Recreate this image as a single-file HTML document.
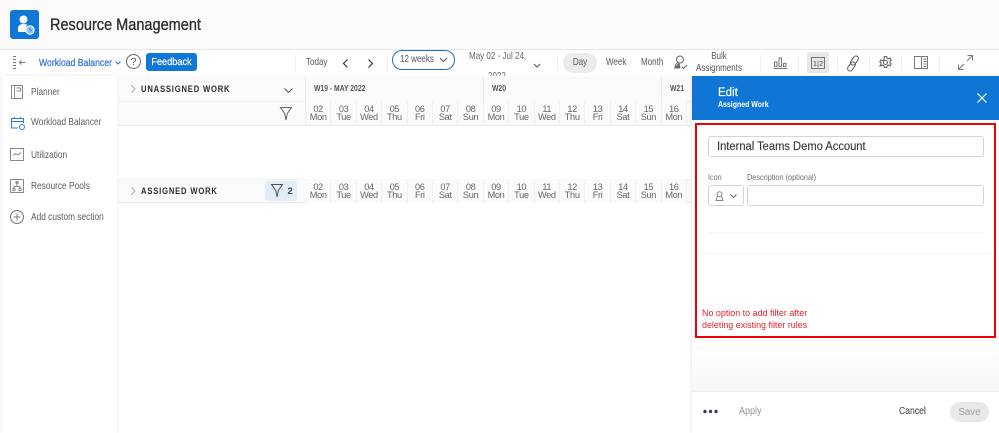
<!DOCTYPE html>
<html><head><meta charset="utf-8">
<style>
html,body{margin:0;padding:0;background:#fff}
#p{position:relative;width:999px;height:433px;overflow:hidden;background:#fff;font-family:"Liberation Sans",sans-serif;color:#4b4b4b}
#p div{position:absolute}
.t{white-space:nowrap;transform-origin:0 50%}
.d{width:25.4px;text-align:center;font-size:9.2px;letter-spacing:-.35px;line-height:8px;color:#666;height:24px;border-right:1px solid #f0f0f0;box-sizing:border-box;padding-top:4px;background:#fafafa}
.n{font-size:10.3px;color:#5c5c5c;left:31px;white-space:nowrap;transform:scaleX(.81);transform-origin:0 50%}
.s{width:1px;background:#ececec;top:55px;height:16px}
.b{font-size:10.3px;line-height:12px;color:#555;transform:scaleX(.78)}
.h{font-size:9.3px;font-weight:700;letter-spacing:1px;line-height:12px;color:#2c2c2c;transform:scaleX(.82)}
.w{font-size:8.5px;font-weight:700;line-height:11px;color:#555;transform:scaleX(.8)}
svg{position:absolute;overflow:visible}
</style></head><body><div id="p">

<div style="left:0;top:0;width:999px;height:49px;background:#fafafa"></div>
<div style="left:0;top:49px;width:999px;height:1px;background:#e6e6e6"></div>
<div style="left:10px;top:10px;width:29px;height:29px;background:#0f78d7;border-radius:3px"></div>
<svg style="left:10px;top:10px" width="29" height="29" viewBox="0 0 29 29"><circle cx="13.500" cy="9.500" r="4" fill="#fff"/><path d="M8 22v-3.500c0-3 2.500-4.500 5.500-4.500 2 0 3 .4 4 1-2 1.500-2.500 4.500-1.500 7z" fill="#fff"/><circle cx="20" cy="20" r="4.200" fill="#9cc6ee" stroke="#fff"/><path d="M20 18v2.200l1.500 1" stroke="#0f78d7" fill="none"/></svg>
<div class="t" style="left:50px;top:16px;font-size:16.500px;color:#2c2c2c;-webkit-text-stroke:.3px #2c2c2c;line-height:19px;transform:scaleX(.88)">Resource Management</div>

<!-- toolbar -->
<svg style="left:13px;top:56px" width="13" height="14" viewBox="0 0 13 14" fill="none" stroke="#777"><path d="M0 .5h3M0 3.500h3M0 6.500h3M0 9.500h3M0 12.500h3M12.500 6.500H6.500M8.500 4.500l-2 2 2 2"/></svg>
<div class="t" style="left:38.500px;top:57.500px;font-size:10.300px;color:#2b6fd4;-webkit-text-stroke:.2px #2b6fd4;line-height:12px;transform:scaleX(.84)">Workload Balancer</div>
<svg style="left:115px;top:60.500px" width="6" height="4" viewBox="0 0 6 4" fill="none" stroke="#2b6fd4"><path d="M.5.500 3 3 5.500.5"/></svg>
<div class="t" style="left:126px;top:54px;width:13px;height:13px;border:1px solid #666;border-radius:50%;text-align:center;font-size:10.500px;line-height:15px;color:#555">?</div>
<div style="left:146px;top:53px;width:51px;height:18px;background:#0f78d7;border-radius:3px"></div>
<div class="t" style="left:146px;top:54px;width:51px;color:#fff;text-align:center;font-size:10.300px;line-height:17px;-webkit-text-stroke:.2px #fff;transform:scaleX(.89);transform-origin:50% 50%">Feedback</div>
<div class="s" style="left:295px"></div>
<div class="t b" style="left:305.500px;top:57px">Today</div>
<svg style="left:341px;top:58px" width="8" height="11" viewBox="0 0 8 11" fill="none" stroke="#333" stroke-width="1.200"><path d="M6.500 1.500 2.500 5.500 6.500 9.500"/></svg>
<div class="s" style="left:387px"></div>
<svg style="left:367px;top:58px" width="8" height="11" viewBox="0 0 8 11" fill="none" stroke="#333" stroke-width="1.200"><path d="M1.500 1.500 5.500 5.500 1.500 9.500"/></svg>
<div style="left:392px;top:49.500px;width:60.500px;height:18.500px;border:1.200px solid #1c6fd0;border-radius:10px"></div>
<div class="t b" style="left:400px;top:53.500px">12 weeks</div>
<svg style="left:439px;top:56.500px" width="9" height="6" viewBox="0 0 9 6" fill="none" stroke="#555"><path d="M1 1l3.500 3.500L8 1"/></svg>
<div class="t b" style="left:468.500px;top:50.500px;color:#666">May 02 - Jul 24,</div>
<div class="t b" style="left:488px;top:71px;height:5px;overflow:hidden;color:#666">2022</div>
<svg style="left:533px;top:63px" width="8" height="5" viewBox="0 0 8 5" fill="none" stroke="#555"><path d="M1 1l3 3 3-3"/></svg>
<div class="s" style="left:557px"></div>
<div style="left:563px;top:53px;width:34px;height:20px;background:#ebebeb;border-radius:10px"></div>
<div class="t b" style="left:563px;top:56.500px;width:34px;text-align:center;transform-origin:50% 50%">Day</div>
<div class="t b" style="left:606px;top:56.500px">Week</div>
<div class="t b" style="left:641px;top:56.500px">Month</div>
<svg style="left:674px;top:55px" width="14" height="15" viewBox="0 0 14 15" fill="none" stroke="#666"><circle cx="6" cy="4.500" r="3.500"/><path d="M1 13c0-3 1.500-5 3-5.500M8 12l1.500 1.500L13 10"/><path d="M1 13h5l-1-4.500z" fill="#666"/></svg>
<div class="t b" style="left:689px;top:51px;width:60px;text-align:center;line-height:11.600px;transform-origin:50% 50%">Bulk<br>Assignments</div>
<div class="s" style="left:760px"></div>
<svg style="left:773px;top:57px" width="15" height="12" viewBox="0 0 15 12" fill="none" stroke="#777"><path d="M.5 11.500h14M1.500 9.500V5h2.500v4.500zM6 9.500V1h2.500v8.500zM10.500 9.500V6.500H13v3z"/></svg>
<div class="s" style="left:798px"></div>
<div style="left:807px;top:52px;width:22px;height:21px;background:#e8e8e8"></div>
<div class="t" style="left:811px;top:57px;width:12px;height:10px;border:1px solid #777;font-size:7.500px;line-height:11px;text-align:center;color:#555">1|2</div>
<div class="s" style="left:837px"></div>
<svg style="left:848px;top:56px" width="11" height="15" viewBox="0 0 11 15" fill="none" stroke="#666" stroke-width="1.100"><rect x="4" y="-.5" width="5" height="10" rx="2.500" transform="rotate(35 6.500 4.500)"/><rect x="1" y="5.500" width="5" height="10" rx="2.500" transform="rotate(35 3.500 10.500)"/></svg>
<div class="s" style="left:869px"></div>
<svg style="left:879px;top:56px" width="13" height="13" viewBox="0 0 13 13" fill="none" stroke="#666" stroke-width="1.100"><circle cx="6.500" cy="6.500" r="2"/><path d="M5.300.6h2.400l.4 1.700 1.500.7 1.500-.9 1.100 1.900-1.200 1.200v1.600l1.200 1.200-1.100 1.900-1.500-.9-1.500.7-.4 1.700H5.300l-.4-1.700-1.500-.7-1.500.9L.8 9.800 2 8.600V7L.8 5.800l1.100-1.900 1.500.9 1.500-.7z"/></svg>
<div class="s" style="left:901px"></div>
<svg style="left:914px;top:56px" width="14" height="13" viewBox="0 0 14 13" fill="none" stroke="#777"><path d="M.5.500h13v12H.5zM7.500.500v12M9.500 3h3M9.500 5.500h3M9.500 8h3M9.500 10.500h3"/></svg>
<div class="s" style="left:939px"></div>
<svg style="left:958px;top:55px" width="15" height="15" viewBox="0 0 15 15" fill="none" stroke="#777"><path d="M9 6l5.500-5.500M9.500.500h5v5M6 9 .500 14.500M.500 9.500v5h5"/></svg>

<!-- grid -->
<div style="left:118px;top:76px;width:574px;height:26px;background:#fafafa"></div>
<div style="left:118px;top:102px;width:574px;height:24px;background:#fafafa"></div>
<div style="left:118px;top:125px;width:574px;height:1px;background:#eaeaea"></div>
<div style="left:305px;top:76px;width:1px;height:50px;background:#eaeaea"></div>
<div style="left:483px;top:76px;width:1px;height:25px;background:#eaeaea"></div>
<div style="left:661px;top:76px;width:1px;height:25px;background:#eaeaea"></div>
<svg style="left:131px;top:85px" width="5" height="8" viewBox="0 0 5 8" fill="none" stroke="#aaa"><path d="M.5.500 4 4 .5 7.500"/></svg>
<div class="t h" style="left:140.500px;top:83px">UNASSIGNED WORK</div>
<svg style="left:284px;top:88px" width="9" height="6" viewBox="0 0 9 6" fill="none" stroke="#555"><path d="M.5.500l4 4 4-4"/></svg>
<svg style="left:280px;top:107px" width="12" height="14" viewBox="0 0 12 14" fill="none" stroke="#666"><path d="M.5.500h11L7.300 6.500 6 13 4.700 6.500z"/></svg>
<div class="t w" style="left:314px;top:83px">W19 - MAY 2022</div>
<div class="t w" style="left:491.500px;top:83px">W20</div>
<div class="t w" style="left:669.500px;top:83px">W21</div>

<div style="left:118px;top:101px;width:574px;height:1px;background:#f0f0f0"></div>
<div class="d" style="left:306px;top:101px">02<br>Mon</div><div class="d" style="left:331.400px;top:101px">03<br>Tue</div><div class="d" style="left:356.800px;top:101px">04<br>Wed</div><div class="d" style="left:382.200px;top:101px">05<br>Thu</div><div class="d" style="left:407.600px;top:101px">06<br>Fri</div><div class="d" style="left:433px;top:101px">07<br>Sat</div><div class="d" style="left:458.400px;top:101px">08<br>Sun</div><div class="d" style="left:483.800px;top:101px">09<br>Mon</div><div class="d" style="left:509.200px;top:101px">10<br>Tue</div><div class="d" style="left:534.600px;top:101px">11<br>Wed</div><div class="d" style="left:560px;top:101px">12<br>Thu</div><div class="d" style="left:585.400px;top:101px">13<br>Fri</div><div class="d" style="left:610.800px;top:101px">14<br>Sat</div><div class="d" style="left:636.200px;top:101px">15<br>Sun</div><div class="d" style="left:661.600px;top:101px">16<br>Mon</div>

<div style="left:118px;top:178.500px;width:574px;height:24.500px;background:#fafafa;border-top:1px solid #f0f0f0;border-bottom:1px solid #eaeaea;box-sizing:border-box"></div>
<svg style="left:131px;top:187px" width="5" height="8" viewBox="0 0 5 8" fill="none" stroke="#aaa"><path d="M.5.500 4 4 .5 7.500"/></svg>
<div class="t h" style="left:140.500px;top:185px">ASSIGNED WORK</div>
<div style="left:265px;top:180.500px;width:32px;height:20.500px;background:#e1edf8;border-radius:3px"></div>
<svg style="left:271px;top:184px" width="12" height="14" viewBox="0 0 12 14" fill="none" stroke="#555"><path d="M.5.500h11L7.300 6.500 6 13 4.700 6.500z"/></svg>
<div class="t" style="left:287.500px;top:185.500px;font-size:9.500px;font-weight:700;line-height:12px;color:#444">2</div>

<div class="d" style="left:306px;top:179px">02<br>Mon</div><div class="d" style="left:331.400px;top:179px">03<br>Tue</div><div class="d" style="left:356.800px;top:179px">04<br>Wed</div><div class="d" style="left:382.200px;top:179px">05<br>Thu</div><div class="d" style="left:407.600px;top:179px">06<br>Fri</div><div class="d" style="left:433px;top:179px">07<br>Sat</div><div class="d" style="left:458.400px;top:179px">08<br>Sun</div><div class="d" style="left:483.800px;top:179px">09<br>Mon</div><div class="d" style="left:509.200px;top:179px">10<br>Tue</div><div class="d" style="left:534.600px;top:179px">11<br>Wed</div><div class="d" style="left:560px;top:179px">12<br>Thu</div><div class="d" style="left:585.400px;top:179px">13<br>Fri</div><div class="d" style="left:610.800px;top:179px">14<br>Sat</div><div class="d" style="left:636.200px;top:179px">15<br>Sun</div><div class="d" style="left:661.600px;top:179px">16<br>Mon</div>

<!-- sidebar -->
<div style="left:2px;top:76px;width:115px;height:357px;background:#fff;box-shadow:0 0 3px rgba(0,0,0,.12)"></div>
<svg style="left:11px;top:85px" width="12" height="14" viewBox="0 0 12 14" fill="none" stroke="#888"><path d="M.5.500h11v13H.5zM3.500.500v13M5.500 3h4v3h-4"/></svg>
<div class="n" style="top:86.500px;line-height:12px">Planner</div>
<svg style="left:11px;top:116px" width="14" height="14" viewBox="0 0 14 14" fill="none" stroke="#2b7ed6"><path d="M7 12H.5V2.500h12V7M.5 5.500h12M3.500 1v2M9.500 1v2"/><circle cx="11" cy="11" r="2.500"/></svg>
<div class="n" style="top:116.500px;line-height:12px">Workload Balancer</div>
<svg style="left:10px;top:148px" width="14" height="13" viewBox="0 0 14 13" fill="none" stroke="#888"><path d="M.5.500h13v12H.5zM3 7.500l2.500-2 2.500 1.500 3-2.500"/></svg>
<div class="n" style="top:149.500px;line-height:12px">Utilization</div>
<svg style="left:10px;top:179px" width="14" height="14" viewBox="0 0 14 14" fill="none" stroke="#888"><path d="M.5.500h13v13H.5zM7 3v4M4 10V7.500h6V10"/><circle cx="7" cy="3.500" r="1.200" fill="none"/><circle cx="4" cy="10.500" r="1.200" fill="none"/><circle cx="10" cy="10.500" r="1.200" fill="none"/></svg>
<div class="n" style="top:180.500px;line-height:12px">Resource Pools</div>
<svg style="left:10px;top:210px" width="14" height="14" viewBox="0 0 14 14" fill="none" stroke="#777"><circle cx="7" cy="7" r="6.500"/><path d="M7 3.500v7M3.500 7h7"/></svg>
<div class="n" style="top:211.500px;line-height:12px">Add custom section</div>

<!-- panel -->
<div style="left:692px;top:76px;width:307px;height:357px;background:#fff;box-shadow:-1px 0 2px rgba(0,0,0,.08)"></div>
<div style="left:692px;top:76px;width:307px;height:44px;background:#0f76d6"></div>
<div class="t" style="left:718px;top:86px;font-size:11.500px;line-height:14px;color:#fff;-webkit-text-stroke:.2px #fff">Edit</div>
<div class="t" style="left:718px;top:98.500px;font-size:8.300px;font-weight:700;line-height:11px;color:#fff;transform:scaleX(.84)">Assigned Work</div>
<svg style="left:977px;top:93px" width="10" height="10" viewBox="0 0 10 10" fill="none" stroke="#fff" stroke-width="1.200"><path d="M.5.500l9 9M9.500.500l-9 9"/></svg>

<div style="left:695px;top:122.500px;width:301px;height:215px;box-sizing:border-box;border:2px solid #ee0008"></div>
<div style="left:708px;top:136px;width:276px;height:21px;box-sizing:border-box;border:1px solid #d4d4d4;border-radius:3px"></div>
<div class="t" style="left:716.500px;top:139.500px;font-size:11.500px;line-height:15px;color:#3a3a3a;-webkit-text-stroke:.15px #3a3a3a;transform:scaleX(.97)">Internal Teams Demo Account</div>
<div class="t" style="left:708px;top:171.500px;font-size:8.500px;line-height:11px;color:#6e6e6e;transform:scaleX(.85)">Icon</div>
<div class="t" style="left:747px;top:171.500px;font-size:8.500px;line-height:11px;color:#6e6e6e;transform:scaleX(.86)">Description (optional)</div>
<div style="left:708px;top:185px;width:36px;height:21px;box-sizing:border-box;border:1px solid #d4d4d4;border-radius:3px"></div>
<div style="left:747px;top:185px;width:237px;height:21px;box-sizing:border-box;border:1px solid #d4d4d4;border-radius:3px"></div>
<svg style="left:715px;top:191px" width="9" height="10" viewBox="0 0 9 10" fill="none" stroke="#888"><circle cx="4.500" cy="3.300" r="2.500"/><path d="M2.500 5 1 9.500h7L6.500 5"/></svg>
<svg style="left:730px;top:194px" width="7" height="4" viewBox="0 0 7 4" fill="none" stroke="#666"><path d="M.5.500l3 3 3-3"/></svg>
<div style="left:708px;top:232px;width:276px;height:1px;background:#f7f7f7"></div>
<div style="left:697px;top:253px;width:297px;height:1px;background:#f7f7f7"></div>
<div class="t" style="left:702px;top:308px;font-size:9.300px;line-height:11.600px;color:#e8202a;transform:scaleX(.96)">No option to add filter after<br>deleting existing filter rules</div>

<div style="left:692px;top:345px;width:307px;height:46px;background:linear-gradient(#fff,#f6f6f7)"></div>
<div style="left:692px;top:391px;width:307px;height:1px;background:#eeeeee"></div>
<svg style="left:703px;top:409px" width="15" height="5" viewBox="0 0 15 5" fill="#3b4150"><circle cx="2" cy="2.500" r="1.700"/><circle cx="7.500" cy="2.500" r="1.700"/><circle cx="13" cy="2.500" r="1.700"/></svg>
<div class="t" style="left:739px;top:406px;font-size:9.800px;line-height:12px;color:#a3a3a3;-webkit-text-stroke:.15px #a3a3a3;transform:scaleX(.92)">Apply</div>
<div class="t" style="left:899px;top:406px;font-size:9.800px;line-height:12px;color:#555;-webkit-text-stroke:.15px #555;transform:scaleX(.88)">Cancel</div>
<div class="t" style="left:950px;top:402px;width:39px;height:20px;background:#e8e8e8;border-radius:10px;text-align:center;font-size:9.800px;line-height:21px;color:#aaa;-webkit-text-stroke:.15px #aaa">Save</div>

</div></body></html>
